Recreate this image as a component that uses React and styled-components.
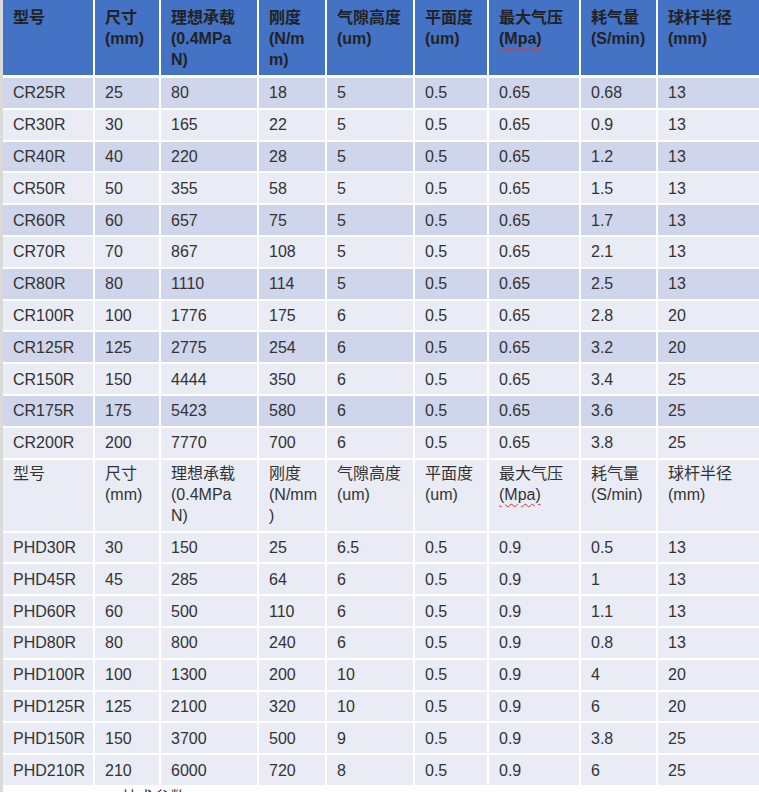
import styled, { createGlobalStyle } from "styled-components";

const GlobalStyle = createGlobalStyle`
  html, body {
    margin: 0;
    padding: 0;
    background: #ffffff;
    overflow: hidden;
  }
  body {
    font-family: "Liberation Sans", "Noto Sans CJK SC", Arial, sans-serif;
  }
`;

const crRows = [
    ["CR25R", "25", "80", "18", "5", "0.5", "0.65", "0.68", "13"],
    ["CR30R", "30", "165", "22", "5", "0.5", "0.65", "0.9", "13"],
    ["CR40R", "40", "220", "28", "5", "0.5", "0.65", "1.2", "13"],
    ["CR50R", "50", "355", "58", "5", "0.5", "0.65", "1.5", "13"],
    ["CR60R", "60", "657", "75", "5", "0.5", "0.65", "1.7", "13"],
    ["CR70R", "70", "867", "108", "5", "0.5", "0.65", "2.1", "13"],
    ["CR80R", "80", "1110", "114", "5", "0.5", "0.65", "2.5", "13"],
    ["CR100R", "100", "1776", "175", "6", "0.5", "0.65", "2.8", "20"],
    ["CR125R", "125", "2775", "254", "6", "0.5", "0.65", "3.2", "20"],
    ["CR150R", "150", "4444", "350", "6", "0.5", "0.65", "3.4", "25"],
    ["CR175R", "175", "5423", "580", "6", "0.5", "0.65", "3.6", "25"],
    ["CR200R", "200", "7770", "700", "6", "0.5", "0.65", "3.8", "25"],
];

const phdRows = [
    ["PHD30R", "30", "150", "25", "6.5", "0.5", "0.9", "0.5", "13"],
    ["PHD45R", "45", "285", "64", "6", "0.5", "0.9", "1", "13"],
    ["PHD60R", "60", "500", "110", "6", "0.5", "0.9", "1.1", "13"],
    ["PHD80R", "80", "800", "240", "6", "0.5", "0.9", "0.8", "13"],
    ["PHD100R", "100", "1300", "200", "10", "0.5", "0.9", "4", "20"],
    ["PHD125R", "125", "2100", "320", "10", "0.5", "0.9", "6", "20"],
    ["PHD150R", "150", "3700", "500", "9", "0.5", "0.9", "3.8", "25"],
    ["PHD210R", "210", "6000", "720", "8", "0.5", "0.9", "6", "25"],
];

// header cells, one entry per line
const headTop = [
    ["型号"],
    ["尺寸", "(mm)"],
    ["理想承载", "(0.4MPa", "N)"],
    ["刚度", "(N/m", "m)"],
    ["气隙高度", "(um)"],
    ["平面度", "(um)"],
    ["最大气压", "(Mpa)"],
    ["耗气量", "(S/min)"],
    ["球杆半径", "(mm)"],
];

const headSecond = [
    ["型号"],
    ["尺寸", "(mm)"],
    ["理想承载", "(0.4MPa", "N)"],
    ["刚度", "(N/mm", ")"],
    ["气隙高度", "(um)"],
    ["平面度", "(um)"],
    ["最大气压", "(Mpa)"],
    ["耗气量", "(S/min)"],
    ["球杆半径", "(mm)"],
];

const HeadCell = ({ lines }) => (
    <>
        {lines.map((line, i) => (
            <Line key={i}>{line === "(Mpa)" ? <Squiggle>(Mpa)</Squiggle> : line}</Line>
        ))}
    </>
);

const App = () => {
    return (
        <Page>
            <GlobalStyle/>
            <Table>
                <Row $top>
                    {headTop.map((lines, i) => (
                        <HeaderCell key={i} $bold $pad={7} $bg="#4472c4">
                            <HeadCell lines={lines}/>
                        </HeaderCell>
                    ))}
                </Row>
                {crRows.map((row, r) => (
                    <Row key={row[0]}>
                        {row.map((v, i) => (
                            <Cell key={i} $bg={r % 2 === 0 ? "#cfd5ea" : "#e9ebf5"}>{v}</Cell>
                        ))}
                    </Row>
                ))}
                <Row>
                    {headSecond.map((lines, i) => (
                        <HeaderCell key={i} $pad={3} $bg="#e9ebf5" $height={71}>
                            <HeadCell lines={lines}/>
                        </HeaderCell>
                    ))}
                </Row>
                {phdRows.map((row) => (
                    <Row key={row[0]}>
                        {row.map((v, i) => (
                            <Cell key={i} $bg="#e9ebf5">{v}</Cell>
                        ))}
                    </Row>
                ))}
            </Table>
            <Caption>技术参数</Caption>
        </Page>
    );
};
export default App;

const Page = styled.div`
  border-left: 3px solid #dadada;
  min-height: 792px;
  box-sizing: border-box;
`;
const Table = styled.div`
  display: flex;
  flex-direction: column;
  gap: 2px;
  background: #ffffff;
  width: 780px;
`;
const Row = styled.div`
  display: grid;
  grid-template-columns: 90px 64px 96px 66px 86px 72px 90px 75px 110px;
  column-gap: 2px;
  margin-bottom: ${p => (p.$top ? "1px" : "0")};
`;
const Cell = styled.div`
  background: ${p => p.$bg};
  height: 29.8px;
  display: flex;
  align-items: center;
  padding: 0 10px;
  font-size: 16px;
  line-height: 21px;
  color: #333333;
  white-space: nowrap;
`;
const HeaderCell = styled.div`
  background: ${p => p.$bg};
  height: ${p => p.$height || 75}px;
  box-sizing: border-box;
  padding: ${p => p.$pad}px 10px 0 10px;
  font-size: 16px;
  line-height: 21px;
  font-weight: ${p => (p.$bold ? "bold" : "normal")};
  color: ${p => (p.$bold ? "#222222" : "#333333")};
`;
const Line = styled.div`
  white-space: nowrap;
`;
const Squiggle = styled.span`
  text-decoration: underline wavy #d33;
  text-decoration-thickness: 1px;
  text-underline-offset: 3px;
`;
const Caption = styled.div`
  padding: 2px 0 0 119px;
  font-size: 16px;
  line-height: 21px;
  color: #333333;
`;
